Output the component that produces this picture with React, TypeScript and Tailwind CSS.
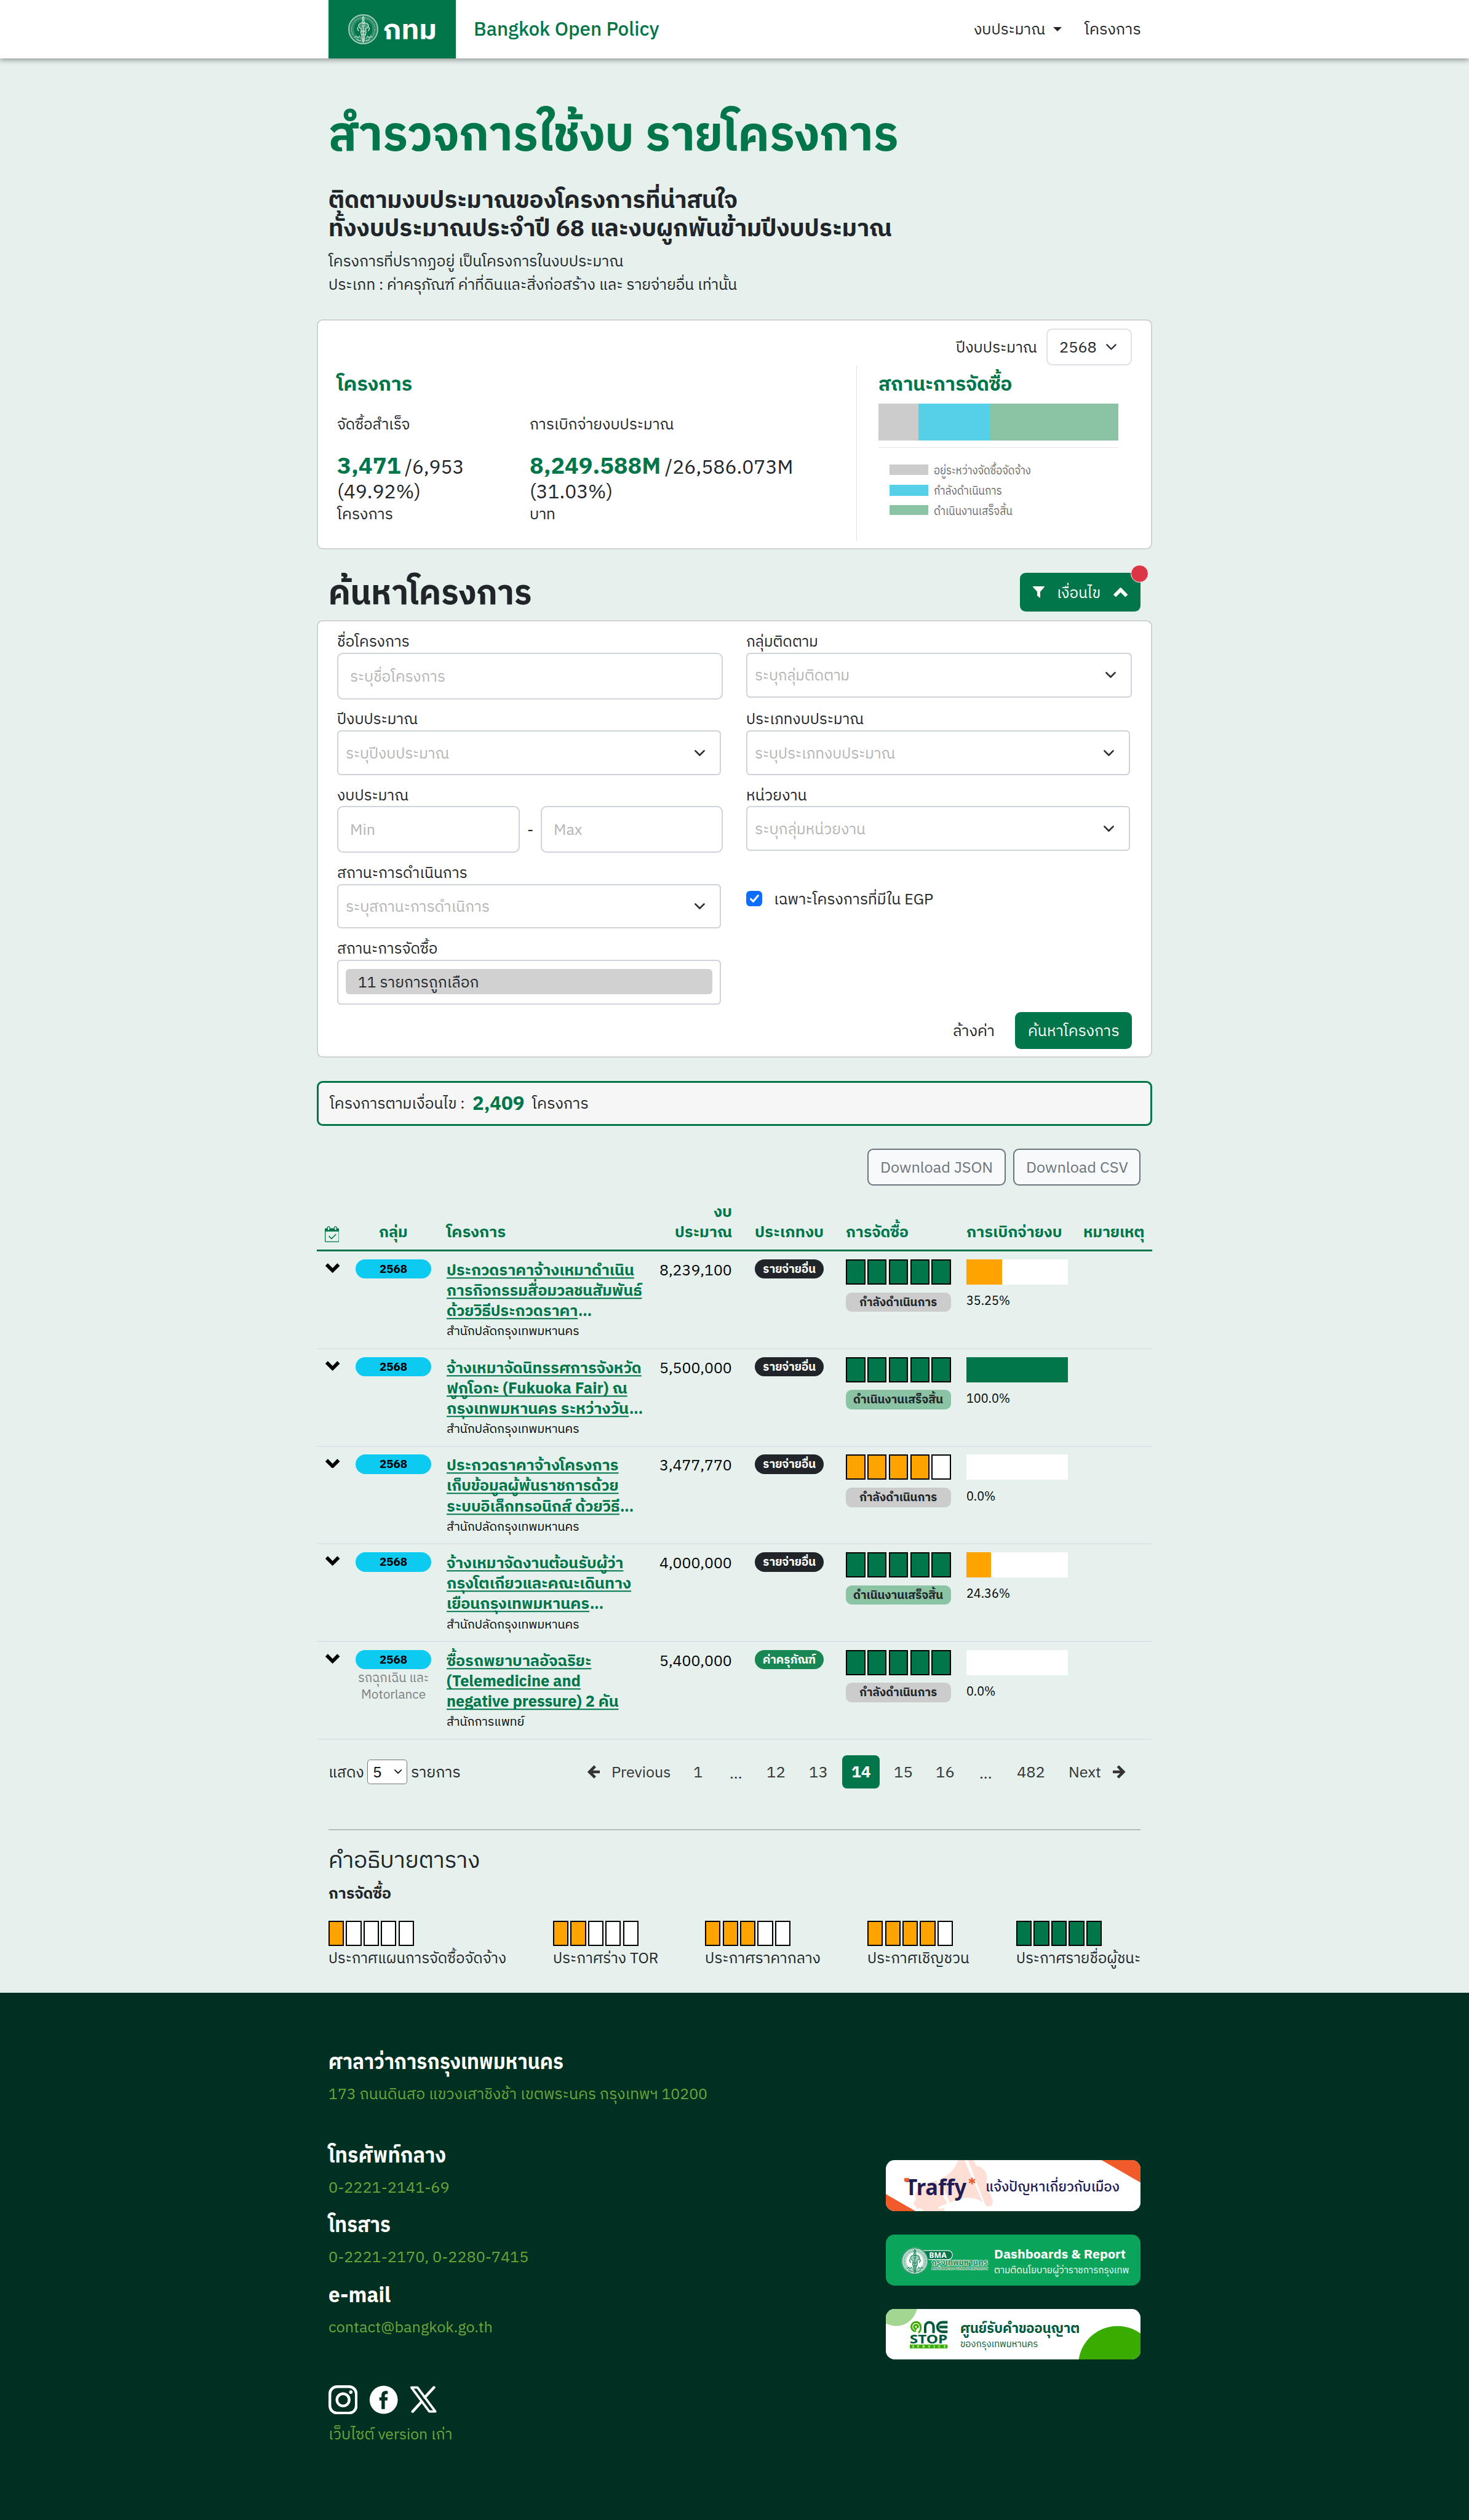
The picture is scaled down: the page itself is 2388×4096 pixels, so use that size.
import { useLayoutEffect, useRef, type ReactNode } from "react";

/* Text stretched or squeezed to the width that its class gives, dropped slightly to sit optically centred. */
function Fit({ className, children }: { className: string; children: ReactNode }) {
  const outer = useRef<HTMLSpanElement>(null);
  const inner = useRef<HTMLSpanElement>(null);
  useLayoutEffect(() => {
    const o = outer.current;
    const i = inner.current;
    if (!o || !i) return;
    i.style.transform = "none";
    const ratio = o.getBoundingClientRect().width / i.getBoundingClientRect().width;
    i.style.transform = `scaleX(${ratio}) translateY(0.09em)`;
  }, []);
  return (
    <span ref={outer} className={`inline-block text-left whitespace-nowrap ${className}`}>
      <span ref={inner} className="inline-block origin-left">
        {children}
      </span>
    </span>
  );
}

function Emblem({ className, solid = false }: { className: string; solid?: boolean }) {
  return (
    <svg viewBox="0 0 62 62" className={className} fill="none" stroke={solid ? "#0b7f50" : "#d3e8de"}>
      {solid && <circle cx="31" cy="31" r="31" fill="#dff1e8" stroke="none" />}
      <circle cx="31" cy="31" r="30" strokeWidth="1.6" />
      <circle cx="31" cy="31" r="28" strokeWidth=".7" />
      <circle cx="31" cy="31" r="24" strokeWidth="4" strokeDasharray="1 1.1" opacity=".75" />
      <circle cx="31" cy="31" r="20.5" strokeWidth=".8" opacity=".7" fill={solid ? "#fff" : "none"} />
      <path
        d="M31 5l-2 4 1 4-2 3 3 3 3-3-2-3 1-4zM24 19l-3 4 2 5 4 2-1 8 2 8 1 9 2 3 2-3 1-9 3-8-1-8 4-2 2-5-3-4-4-1-3 2-3-2zM28 22l3 4 3-4M31 26v28M27 34l4 3 4-3M28 42h7M20 26l-1 5 3 4M42 26l2 4-3 5"
        strokeWidth="1.5"
        fill={solid ? "#0b7f50" : "#d3e8de"}
        fillOpacity=".35"
      />
      <path d="M13 48l4-3 3 4 3-4 3 5M37 50l3-5 3 4 4-4 3 3M17 52l4 2 5 1M36 55l5-1 4-2" strokeWidth="1.6" opacity=".8" />
    </svg>
  );
}

function Chevron({ className, w = 2 }: { className: string; w?: number }) {
  return (
    <svg viewBox="0 0 16 10" className={className} fill="none" stroke="currentColor" strokeWidth={w}>
      {w > 3 ? <path d="M1.800 1.500L8 7.700l6.200-6.200" /> : <path d="M2 2l6 6 6-6" strokeLinecap="round" strokeLinejoin="round" />}
    </svg>
  );
}

function Steps({ n, size = "row" }: { n: number; size?: "row" | "legend" }) {
  const fill = n === 5 ? "bg-[#00764a]" : "bg-[#ffa300]";
  return (
    <div className={size === "row" ? "flex gap-[2px]" : "flex w-[88px] gap-[2px]"}>
      {[0, 1, 2, 3, 4].map((i) => (
        <div key={i} className={`h-[26px] flex-1 border-[1.3px] border-black ${i < n ? fill : "bg-white"}`} />
      ))}
    </div>
  );
}

function Label({ w, children }: { w: string; children: ReactNode }) {
  return (
    <div className="h-6 leading-6">
      <Fit className={w}>{children}</Fit>
    </div>
  );
}

function Select({ text, w, className = "" }: { text: string; w: string; className?: string }) {
  return (
    <div className={`flex h-[46px] items-center justify-between rounded-[4px] border-[1.3px] border-[#ced4da] bg-white pr-[15px] pl-[7.500px] text-[#b5b5b5] ${className}`}>
      <Fit className={w}>{text}</Fit>
      <Chevron className="w-[12px] text-[#2b3036]" w={2.3} />
    </div>
  );
}

function Input({ text, w, className = "" }: { text: string; w: string; className?: string }) {
  return (
    <div className={`flex h-12 items-center rounded-[6px] border-[1.3px] border-[#ced4da] bg-white px-3 text-[#b5b5b5] ${className}`}>
      <Fit className={w}>{text}</Fit>
    </div>
  );
}

const PALAD = { t: "สำนักปลัดกรุงเทพมหานคร", w: "w-[136.500px]" };

const rows = [
  {
    lines: [
      { t: "ประกวดราคาจ้างเหมาดำเนิน", w: "w-[193px]" },
      { t: "การกิจกรรมสื่อมวลชนสัมพันธ์", w: "w-[201px]" },
      { t: "ด้วยวิธีประกวดราคา", w: "w-[135px]" },
    ],
    dots: true,
    org: PALAD,
    amount: "8,239,100",
    steps: 5,
    done: false,
    pct: 35.25,
    label: { t: "35.25%", w: "w-[45px]" },
  },
  {
    lines: [
      { t: "จ้างเหมาจัดนิทรรศการจังหวัด", w: "w-[200.500px]" },
      { t: "ฟูกูโอกะ (Fukuoka Fair) ณ", w: "w-[186px]" },
      { t: "กรุงเทพมหานคร ระหว่างวัน", w: "w-[187.500px]" },
    ],
    dots: true,
    org: PALAD,
    amount: "5,500,000",
    steps: 5,
    done: true,
    pct: 100,
    label: { t: "100.0%", w: "w-[45px]" },
  },
  {
    lines: [
      { t: "ประกวดราคาจ้างโครงการ", w: "w-[177px]" },
      { t: "เก็บข้อมูลผู้พ้นราชการด้วย", w: "w-[177px]" },
      { t: "ระบบอิเล็กทรอนิกส์ ด้วยวิธี", w: "w-[178px]" },
    ],
    dots: true,
    org: PALAD,
    amount: "3,477,770",
    steps: 4,
    done: false,
    pct: 0,
    label: { t: "0.0%", w: "w-[30px]" },
  },
  {
    lines: [
      { t: "จ้างเหมาจัดงานต้อนรับผู้ว่า", w: "w-[182px]" },
      { t: "กรุงโตเกียวและคณะเดินทาง", w: "w-[190px]" },
      { t: "เยือนกรุงเทพมหานคร", w: "w-[147px]" },
    ],
    dots: true,
    org: PALAD,
    amount: "4,000,000",
    steps: 5,
    done: true,
    pct: 24.36,
    label: { t: "24.36%", w: "w-[45px]" },
  },
  {
    lines: [
      { t: "ซื้อรถพยาบาลอัจฉริยะ", w: "w-[149px]" },
      { t: "(Telemedicine and", w: "w-[138px]" },
      { t: "negative pressure) 2 คัน", w: "w-[177px]" },
    ],
    dots: false,
    org: { t: "สำนักการแพทย์", w: "w-[80px]" },
    amount: "5,400,000",
    steps: 5,
    done: false,
    pct: 0,
    label: { t: "0.0%", w: "w-[30px]" },
    group: true,
  },
];

const cols = "grid grid-cols-[32px_94px_217px_92px_101.5px_124.5px_120px_79px]";

function Row({ r }: { r: (typeof rows)[number] }) {
  return (
    <div className={`${cols} h-[100.5px] border-b-[1.300px] border-[#dee2e6] pt-2 text-black`}>
      <div className="flex justify-center pt-[4px]">
        <Chevron className="h-[10px] w-4" w={3.6} />
      </div>
      <div className="px-2 text-center">
        <div className="h-5 rounded-full bg-[#0dcaf0] text-[12px] leading-[19.500px] font-bold"><Fit className="w-[28.500px]">2568</Fit></div>
        {r.group && (
          <div className="-mx-2 text-[13px] leading-[17px] text-[#808080]">
            <Fit className="w-[73px]">รถฉุกเฉิน และ</Fit>
            <br />
            <Fit className="w-[66.500px]">Motorlance</Fit>
          </div>
        )}
      </div>
      <div className="px-2 whitespace-nowrap">
        <div className="h-[63px] leading-[21px] font-bold text-[#00764a]">
          {r.lines.map((l, i) => (
            <div key={i} className="h-[21px]">
              <Fit className={l.w}>
                <span className="underline decoration-[1.5px] underline-offset-[1.800px] [text-decoration-skip-ink:none]">{l.t}</span>
              </Fit>
              {i === 2 && r.dots && <Fit className="w-[14px]">...</Fit>}
            </div>
          ))}
        </div>
        <div className="text-[12.8px] leading-[21px]"><Fit className={r.org.w}>{r.org.t}</Fit></div>
      </div>
      <div className="pr-[7.500px] text-right leading-[22px]"><Fit className="w-[74.500px]">{r.amount}</Fit></div>
      <div className="pl-4">
        <div className={`h-5 w-[71px] rounded-full text-center text-[12px] leading-[19.500px] font-bold text-white ${r.group ? "bg-[#198754]" : "bg-[#212529]"}`}>
          <Fit className="w-[54.500px]">{r.group ? "ค่าครุภัณฑ์" : "รายจ่ายอื่น"}</Fit>
        </div>
      </div>
      <div className="px-2">
        <Steps n={r.steps} />
        <div className={`mt-2 h-5 rounded-[6px] text-center text-[12px] leading-[19.500px] font-bold text-[#212529] ${r.done ? "bg-[#8bc4a5]" : "bg-[#cccccc]"}`}>
          {r.done ? <Fit className="w-[92.500px]">ดำเนินงานเสร็จสิ้น</Fit> : <Fit className="w-[80px]">กำลังดำเนินการ</Fit>}
        </div>
      </div>
      <div className="px-2">
        <div className="h-[26px] bg-white">
          <div className={`h-full ${r.pct === 100 ? "bg-[#00764a]" : "bg-[#ffa300]"}`} style={{ width: `${r.pct}%` }} />
        </div>
        <div className="mt-[6.500px] text-[12.8px] leading-5"><Fit className={r.label.w}>{r.label.t}</Fit></div>
      </div>
    </div>
  );
}

const legend = [
  { n: 1, t: "ประกาศแผนการจัดซื้อจัดจ้าง", w: "w-[183px]" },
  { n: 2, t: "ประกาศร่าง TOR", w: "w-[108.500px]" },
  { n: 3, t: "ประกาศราคากลาง", w: "w-[119px]" },
  { n: 4, t: "ประกาศเชิญชวน", w: "w-[105px]" },
  { n: 5, t: "ประกาศรายชื่อผู้ชนะ", w: "w-[128px]" },
];

function Banners() {
  return (
    <div className="flex w-[262.5px] flex-col gap-6">
      <div className="relative h-[52.5px] overflow-hidden rounded-[9px] bg-white pt-[17.500px] pl-[103px] text-[#211c54]">
        <svg viewBox="0 0 262.5 52.5" className="absolute inset-0 h-full w-full">
          <g fill="#fddfd6">
            <path d="M74.5 0H81L99.5 43C90 37 76 38 66 44L55 20C63 17 71 10 74.5 0z" />
            <path d="M52 21L63 45 59 46 54 48.500 55 50.500 59 49 61 52.500H38.500L37 50H32L28 44 31 41 30 36C32 29 40 24 52 21z" />
            <path d="M84.500 0H90L93.500 6C101 7 107 16 103 22.500L110 42C111 48 104 50 102 45z" />
          </g>
          <path d="M0 35L30.500 52.500H0zM222 0H262.500V23.300z" fill="#f15a29" />
          <text x="20" y="36" fontSize="23" fontWeight="700" fontFamily="'Noto Sans', sans-serif" fill="#211c54" textLength="63" lengthAdjust="spacingAndGlyphs">Traffy</text>
          <rect x="19" y="18.500" width="5" height="3.500" fill="#f15a29" />
          <path d="M88.700 18v7M85.500 19.800l6.400 3.400M91.900 19.800l-6.400 3.400" stroke="#f15a29" strokeWidth="1.500" />
        </svg>
        <div className="relative text-[14px] leading-[19px] font-medium"><Fit className="w-[138px]">แจ้งปัญหาเกี่ยวกับเมือง</Fit></div>
      </div>
      <div className="relative h-[52.5px] overflow-hidden rounded-[9px] bg-[#0ba45b] pt-[11px] pl-[111.5px] text-white">
        <svg viewBox="0 0 262.5 52.5" className="absolute inset-0 h-full w-full">
          <path d="M36 16.500H64a4.600 4.600 0 0 1 0 9.200H36z" fill="#00764a" stroke="#dff1e8" strokeWidth=".8" />
          <text x="44.500" y="24" fontSize="8" fontWeight="700" fontFamily="'Noto Sans', sans-serif" fill="#fff" textLength="18" lengthAdjust="spacingAndGlyphs">BMA</text>
          <text x="47" y="31.500" fontSize="8.500" fontWeight="700" fontFamily="'IBM Plex Sans Thai', 'Noto Sans Thai', sans-serif" fill="#1c8f5e" stroke="#e8f5ee" strokeWidth="1" paintOrder="stroke" textLength="58" lengthAdjust="spacingAndGlyphs">กรุงเทพมหานคร</text>
          <text x="47" y="36.300" fontSize="3" fontWeight="700" fontFamily="'Noto Sans', sans-serif" fill="#0b7f50" stroke="#e8f5ee" strokeWidth=".7" paintOrder="stroke" textLength="58" lengthAdjust="spacingAndGlyphs">BANGKOK METROPOLITAN ADMINISTRATION</text>
        </svg>
        <Emblem solid className="absolute top-[13.5px] left-4 h-7 w-7" />
        <div className="text-[12.5px] leading-[19px] font-bold"><Fit className="w-[135.5px]">Dashboards &amp; Report</Fit></div>
        <div className="text-[10px] leading-[13px]"><Fit className="w-[139px]">ตามติดนโยบายผู้ว่าราชการกรุงเทพ</Fit></div>
      </div>
      <div className="relative h-[52.5px] overflow-hidden rounded-[9px] bg-white pt-[9.500px] pl-[77px] text-[#00593a]">
        <svg viewBox="0 0 262.5 52.5" className="absolute inset-0 h-full w-full">
          <circle cx="10.700" cy="-4.200" r="21.700" fill="#a3d691" />
          <circle cx="238.500" cy="57.900" r="40.400" fill="#3aac00" />
          <path d="M31 22.800C25 23 24.500 14 31 13.400C37 13.500 37 22 33.500 24.500M31.800 20.500C28.500 21 28 16.500 31 16.300C34 16.500 33.500 19.500 31.500 19" fill="none" stroke="#3aac00" strokeWidth="1.900" />
          <g fill="none" stroke="#00593a" strokeWidth="2.600">
            <path d="M40.500 24.800V18a4.300 4.300 0 0 1 8.600 0V24.800" />
            <path d="M63.500 13.700H58a4.900 4.900 0 0 0 0 9.800H63.500M55 18.600H63.500" />
          </g>
          <text x="24.500" y="35.700" fontSize="12.500" fontWeight="700" fontFamily="'Noto Sans', sans-serif" fill="#00593a" textLength="39" lengthAdjust="spacingAndGlyphs">STOP</text>
          <rect x="24.700" y="36.600" width="38.800" height="4" fill="#3aac00" />
          <text x="27" y="40" fontSize="3.600" fontWeight="700" fontFamily="'Noto Sans', sans-serif" fill="#eaf7e0" textLength="34.500">SERVICE</text>
        </svg>
        <div className="relative text-[14px] leading-[20px] font-bold"><Fit className="w-[123px]">ศูนย์รับคำขออนุญาต</Fit></div>
        <div className="relative text-[10.5px] leading-[13px]"><Fit className="w-[80px]">ของกรุงเทพมหานคร</Fit></div>
      </div>
    </div>
  );
}

const footHead = "h-[26px] text-[22px] leading-[26px] font-bold text-white";

export default function App() {
  return (
    <div className="h-[2593.4px] w-[1512px] bg-[#e6f0ec] font-['IBM_Plex_Sans_Thai','Noto_Sans_Thai','Noto_Sans',sans-serif] text-[16px] leading-6 text-[#212529] [zoom:1.57937]">
      <header className="relative h-[60px] bg-white shadow-[0_2px_5px_rgba(0,0,0,0.36)]">
        <div className="mx-auto flex h-full w-[836px] items-center">
          <div className="flex h-full w-[131px] items-center bg-[#00764a] pl-[20.5px] text-white">
            <Emblem className="h-[31px] w-[31px]" />
            <span className="ml-[5px] text-[28px] leading-[48px] font-bold"><Fit className="w-[55px]">กทม</Fit></span>
          </div>
          <span className="ml-[18.500px] text-[20px] font-medium text-[#00764a]"><Fit className="w-[191px]">Bangkok Open Policy</Fit></span>
          <nav className="ml-auto flex items-center">
            <Fit className="w-[73.500px]">งบประมาณ</Fit>
            <span className="mr-[23px] ml-[8.500px] border-x-[5px] border-t-[5px] border-x-transparent border-t-[#212529]" />
            <Fit className="w-[58px]">โครงการ</Fit>
          </nav>
        </div>
      </header>

      <main className="mx-auto h-[1991px] w-[860px]">
        <div className="px-3 pt-[47.400px]">
          <h1 className="h-[59px] text-[50px] leading-[58px] font-bold text-[#00764a]"><Fit className="w-[587px]">สำรวจการใช้งบ รายโครงการ</Fit></h1>
          <h2 className="mt-[25px] h-[57.600px] text-[24px] leading-[28.8px] font-bold">
            <Fit className="w-[421px]">ติดตามงบประมาณของโครงการที่น่าสนใจ</Fit><br />
            <Fit className="w-[580px]">ทั้งงบประมาณประจำปี 68 และงบผูกพันข้ามปีงบประมาณ</Fit>
          </h2>
          <p className="mt-[7.600px] h-12">
            <Fit className="w-[303.500px]">โครงการที่ปรากฏอยู่ เป็นโครงการในงบประมาณ</Fit><br />
            <Fit className="w-[420.500px]">ประเภท : ค่าครุภัณฑ์ ค่าที่ดินและสิ่งก่อสร้าง และ รายจ่ายอื่น เท่านั้น</Fit>
          </p>
        </div>

        <section className="mt-[24px] h-[237px] rounded-[6px] border-[1.3px] border-[#cfd2d1] bg-white px-5 pt-2">
          <div className="flex items-center justify-end gap-[9px]">
            <Fit className="w-[83.500px]">ปีงบประมาณ</Fit>
            <div className="flex h-[38px] w-[88px] items-center justify-between rounded-[6px] border-[1.3px] border-[#dee2e6] pr-[14px] pl-3">
              <Fit className="w-[38.500px]">2568</Fit>
              <Chevron className="w-[12px] text-[#2b3036]" w={2} />
            </div>
          </div>
          <div className="flex">
            <div className="h-[181px] w-[535px] border-r border-[#dee2e6] pt-[7.500px]">
              <h5 className="text-[20px] leading-6 font-bold text-[#00764a]"><Fit className="w-[77.500px]">โครงการ</Fit></h5>
              <div className="mt-[16.6px] flex">
                <div className="w-[198px]">
                  <div><Fit className="w-[75px]">จัดซื้อสำเร็จ</Fit></div>
                  <div className="mt-[18.9px] h-[50px] text-[20px] leading-[25px]">
                    <b className="text-[24px] text-[#00764a]"><Fit className="w-[65.500px]">3,471</Fit></b><Fit className="ml-1 w-[61px]">/6,953</Fit><br /><Fit className="w-[86px]">(49.92%)</Fit>
                  </div>
                  <div><Fit className="w-[57.500px]">โครงการ</Fit></div>
                </div>
                <div>
                  <div><Fit className="w-[148.500px]">การเบิกจ่ายงบประมาณ</Fit></div>
                  <div className="mt-[18.9px] h-[50px] text-[20px] leading-[25px]">
                    <b className="text-[24px] text-[#00764a]"><Fit className="w-[135px]">8,249.588M</Fit></b><Fit className="ml-1 w-[132px]">/26,586.073M</Fit><br /><Fit className="w-[85.500px]">(31.03%)</Fit>
                  </div>
                  <div><Fit className="w-[26.500px]">บาท</Fit></div>
                </div>
              </div>
            </div>
            <div className="w-[269px] pt-[7.500px] pl-[22px]">
              <h5 className="text-[20px] leading-6 font-bold text-[#00764a]"><Fit className="w-[137.500px]">สถานะการจัดซื้อ</Fit></h5>
              <div className="mt-[7.8px] flex h-[38.5px]">
                <div className="w-[41px] bg-[#cccccc]" />
                <div className="w-[74px] bg-[#56d0e8]" />
                <div className="flex-1 bg-[#8bc4a5]" />
              </div>
              <div className="mt-[6.5px] h-px bg-[#e5e5e5]" />
              <div className="mt-[17px] ml-[11px] flex flex-col gap-[10px] text-[12px] leading-[11px] text-[#666]">
                <div className="flex h-[11px] gap-[6px]"><i className="h-[11px] w-10 bg-[#cccccc]" /><Fit className="w-[100px]">อยู่ระหว่างจัดซื้อจัดจ้าง</Fit></div>
                <div className="flex h-[11px] gap-[6px]"><i className="h-[11px] w-10 bg-[#56d0e8]" /><Fit className="w-[70px]">กำลังดำเนินการ</Fit></div>
                <div className="flex h-[11px] gap-[6px]"><i className="h-[10px] w-10 bg-[#8bc4a5]" /><Fit className="w-[81px]">ดำเนินงานเสร็จสิ้น</Fit></div>
              </div>
            </div>
          </div>
        </section>

        <div className="mt-[22px] flex h-[51px] justify-between px-3">
          <h2 className="text-[36px] leading-[42px] font-bold"><Fit className="w-[209.500px]">ค้นหาโครงการ</Fit></h2>
          <div className="relative mt-[2px] flex h-10 w-[124px] items-center rounded-[6px] bg-[#00764a] pl-[13px] text-white">
            <svg viewBox="0 0 12 12" className="h-3 w-3" fill="currentColor"><path d="M.3 0h11.400c.4 0 .4.500.2.800L7.600 5.500V12L4.500 9.800V5.500L.1.800C-.1.500 0 0 .3 0z" /></svg>
            <Fit className="ml-[12.500px] w-[45px]">เงื่อนไข</Fit>
            <Chevron className="ml-[13px] h-[10px] w-4 rotate-180" w={3.600} />
            <span className="absolute -top-2 -right-2 h-[18px] w-[18px] rounded-full border border-[#f8f9fa] bg-[#dc3545]" />
          </div>
        </div>

        <section className="h-[450px] rounded-[6px] border-[1.3px] border-[#cfd2d1] bg-white px-5 pt-2">
          <div className="grid h-[394px] grid-cols-[397px_397px] gap-x-6">
            <div className="flex flex-col">
              <Label w="w-[74.500px]">ชื่อโครงการ</Label>
              <Input text="ระบุชื่อโครงการ" w="w-[98px]" />
              <div className="mt-2"><Label w="w-[83px]">ปีงบประมาณ</Label></div>
              <Select text="ระบุปีงบประมาณ" w="w-[106.500px]" className="w-[395px]" />
              <div className="mt-2"><Label w="w-[73.500px]">งบประมาณ</Label></div>
              <div className="flex items-center justify-between">
                <Input text="Min" w="w-[26px]" className="w-[187.5px]" />
                <Fit className="w-[6.500px]">-</Fit>
                <Input text="Max" w="w-[29.500px]" className="w-[187.5px]" />
              </div>
              <div className="mt-2"><Label w="w-[134px]">สถานะการดำเนินการ</Label></div>
              <Select text="ระบุสถานะการดำเนิการ" w="w-[148px]" className="w-[395px]" />
              <div className="mt-2"><Label w="w-[103.500px]">สถานะการจัดซื้อ</Label></div>
              <div className="h-[46px] w-[395px] rounded-[4px] border-[1.3px] border-[#ced4da] px-[7.5px] pt-2">
                <div className="h-[26.4px] rounded-[4px] bg-[#d1d1d1] pl-[12.5px] leading-[26px]"><Fit className="w-[124.500px]">11 รายการถูกเลือก</Fit></div>
              </div>
            </div>
            <div className="flex flex-col">
              <Label w="w-[74px]">กลุ่มติดตาม</Label>
              <Select text="ระบุกลุ่มติดตาม" w="w-[97.500px]" />
              <div className="mt-[10px]"><Label w="w-[121px]">ประเภทงบประมาณ</Label></div>
              <Select text="ระบุประเภทงบประมาณ" w="w-[144.500px]" className="w-[395px]" />
              <div className="mt-2"><Label w="w-[62.500px]">หน่วยงาน</Label></div>
              <Select text="ระบุกลุ่มหน่วยงาน" w="w-[114px]" className="w-[395px]" />
              <div className="mt-[37px] flex items-center gap-3">
                <span className="flex h-4 w-4 items-center justify-center rounded-[4px] bg-[#0d6efd]">
                  <svg viewBox="0 0 12 12" className="h-3 w-3" fill="none" stroke="#fff" strokeWidth="2" strokeLinecap="round" strokeLinejoin="round"><path d="M2.200 6.500l2.500 2.500 5-6" /></svg>
                </span>
                <Fit className="w-[164px]">เฉพาะโครงการที่มีใน EGP</Fit>
              </div>
            </div>
          </div>
          <div className="flex items-center justify-end gap-[21px]">
            <Fit className="w-[43px]">ล้างค่า</Fit>
            <span className="flex h-[38px] w-[120px] items-center justify-center rounded-[6px] bg-[#00764a] text-white"><Fit className="w-[94px]">ค้นหาโครงการ</Fit></span>
          </div>
        </section>

        <div className="mt-6 flex h-[46px] items-center rounded-[6px] border-2 border-[#00764a] bg-[#f6f6f6] pl-[11.500px]">
          <Fit className="w-[139px]">โครงการตามเงื่อนไข :</Fit>
          <b className="mx-2 text-[20px] text-[#00764a]"><Fit className="w-[53.500px]">2,409</Fit></b>
          <Fit className="w-[58px]">โครงการ</Fit>
        </div>

        <div className="mt-[23.500px] flex justify-end gap-2 px-3 text-[#6c757d]">
          <span className="flex h-[38px] w-[142px] items-center justify-center rounded-[6px] border-[1.3px] border-[#6c757d] bg-[#f8f9fa]"><Fit className="w-[116px]">Download JSON</Fit></span>
          <span className="flex h-[38px] w-[131px] items-center justify-center rounded-[6px] border-[1.3px] border-[#6c757d] bg-[#f8f9fa]"><Fit className="w-[105px]">Download CSV</Fit></span>
        </div>

        <div className={`${cols} mt-2 h-[60px] items-end border-b-2 border-[#00764a] pb-2 leading-[21px] font-bold whitespace-nowrap text-[#00764a]`}>
          <div className="pl-2">
            <svg viewBox="0 0 15 16.500" className="h-[16.500px] w-[15px]" fill="none" stroke="#00764a">
              <rect x=".4" y="2.800" width="14.200" height="13.300" rx=".8" strokeWidth=".8" />
              <path d="M0 2.300h15V5.500H0z" fill="#00764a" stroke="none" />
              <rect x="2.700" y=".4" width="2.400" height="4" rx="1.200" fill="#e6f0ec" strokeWidth=".8" />
              <rect x="9.800" y=".4" width="2.400" height="4" rx="1.200" fill="#e6f0ec" strokeWidth=".8" />
              <path d="M4.200 10.200l2.700 2.700 4.700-4.700" />
            </svg>
          </div>
          <div className="h-[21px] text-center"><Fit className="w-[29.500px]">กลุ่ม</Fit></div>
          <div className="h-[21px] px-2"><Fit className="w-[61px]">โครงการ</Fit></div>
          <div className="h-[42px] pr-[7.500px] text-right"><Fit className="w-[19px]">งบ</Fit><br /><Fit className="w-[59px]">ประมาณ</Fit></div>
          <div className="h-[21px] pl-4"><Fit className="w-[71px]">ประเภทงบ</Fit></div>
          <div className="h-[21px] px-2"><Fit className="w-[64.500px]">การจัดซื้อ</Fit></div>
          <div className="h-[21px] px-2"><Fit className="w-[98.500px]">การเบิกจ่ายงบ</Fit></div>
          <div className="h-[21px] pl-2"><Fit className="w-[63px]">หมายเหตุ</Fit></div>
        </div>
        {rows.map((r, i) => (
          <Row key={i} r={r} />
        ))}

        <div className="mt-4 flex h-[34px] items-center px-3">
          <Fit className="w-[36.500px]">แสดง</Fit>
          <span className="mr-1 ml-[3.500px] flex h-[25px] w-[41px] items-center justify-between rounded-[3px] border border-[#767676] bg-white pr-1 pl-[5px] text-black">
            <Fit className="w-[9.600px]">5</Fit>
            <Chevron className="w-[9px]" w={1.800} />
          </span>
          <Fit className="w-[51px]">รายการ</Fit>
          <div className="ml-auto flex items-center pr-[15.500px] text-[#333]">
            <svg viewBox="0 0 13 14" className="h-[14px] w-[13px]" fill="none" stroke="currentColor" strokeWidth="2.900"><path d="M13 7H2.500M7.800 1.200L2 7l5.800 5.800" /></svg>
            <span className="mr-[8.500px] ml-3"><Fit className="w-[61px]">Previous</Fit></span>
            <span className="w-[39px] text-center"><Fit className="w-[9.600px]">1</Fit></span>
            <span className="w-[39px] pt-[3px] text-center"><Fit className="w-[13px]">...</Fit></span>
            <span className="w-[43px] text-center"><Fit className="w-[19.500px]">12</Fit></span>
            <span className="w-[44px] text-center"><Fit className="w-[19.500px]">13</Fit></span>
            <span className="mx-[2.500px] flex h-[34px] w-[39px] items-center justify-center rounded-[5px] bg-[#00764a] font-bold text-white"><Fit className="w-[20px]">14</Fit></span>
            <span className="w-[43px] text-center"><Fit className="w-[19.500px]">15</Fit></span>
            <span className="w-[43px] text-center"><Fit className="w-[19.500px]">16</Fit></span>
            <span className="w-[41px] pt-[3px] text-center"><Fit className="w-[13px]">...</Fit></span>
            <span className="w-[52px] text-center"><Fit className="w-[29px]">482</Fit></span>
            <span className="mr-3 ml-[13px]"><Fit className="w-[33.500px]">Next</Fit></span>
            <svg viewBox="0 0 13 14" className="h-[14px] w-[13px]" fill="none" stroke="currentColor" strokeWidth="2.900"><path d="M0 7h10.500M5.200 1.200L11 7l-5.800 5.800" /></svg>
          </div>
        </div>

        <div className="mx-3 mt-[42px] border-t-[1.300px] border-[#b5bdb9]">
          <h4 className="mt-[15.500px] h-[28.800px] text-[24px] leading-[28.800px]"><Fit className="w-[156px]">คำอธิบายตาราง</Fit></h4>
          <div className="mt-[8.500px] h-6 font-bold"><Fit className="w-[64.500px]">การจัดซื้อ</Fit></div>
          <div className="mt-4 flex justify-between">
            {legend.map((l) => (
              <div key={l.n}>
                <Steps n={l.n} size="legend" />
                <div><Fit className={l.w}>{l.t}</Fit></div>
              </div>
            ))}
          </div>
        </div>
      </main>

      <footer className="h-[542.400px] bg-[#003021] text-[#6ca53a]">
        <div className="mx-auto flex w-[836px] justify-between">
          <div className="pt-[57.500px]">
            <div className={footHead}><Fit className="w-[242px]">ศาลาว่าการกรุงเทพมหานคร</Fit></div>
            <div className="mt-[8.300px] h-6"><Fit className="w-[390px]">173 ถนนดินสอ แขวงเสาชิงช้า เขตพระนคร กรุงเทพฯ 10200</Fit></div>
            <div className={`mt-[37.700px] ${footHead}`}><Fit className="w-[121px]">โทรศัพท์กลาง</Fit></div>
            <div className="mt-[8.300px] h-6"><Fit className="w-[124.500px]">0-2221-2141-69</Fit></div>
            <div className={`mt-[13.700px] ${footHead}`}><Fit className="w-[64px]">โทรสาร</Fit></div>
            <div className="mt-[8.300px] h-6"><Fit className="w-[206px]">0-2221-2170, 0-2280-7415</Fit></div>
            <div className={`mt-[13.700px] ${footHead}`}><Fit className="w-[64px]">e-mail</Fit></div>
            <div className="mt-[8.300px] h-6"><Fit className="w-[169px]">contact@bangkok.go.th</Fit></div>
            <div className="mt-[48px] flex items-center gap-3 text-white">
              <svg viewBox="0 0 30 30" className="h-[30px] w-[30px]" fill="none" stroke="currentColor" strokeWidth="2.800"><rect x="1.400" y="1.400" width="27.200" height="27.200" rx="7.500" /><circle cx="15" cy="15" r="6.300" /><circle cx="23" cy="7" r="1.800" fill="currentColor" stroke="none" /></svg>
              <svg viewBox="0 0 30 30" className="h-[30px] w-[30px]"><circle cx="15" cy="15" r="14.500" fill="currentColor" /><path d="M12.800 24.500v-8.800h-2.200v-3.300h2.200v-2c0-3.200 1.700-4.600 4.400-4.600.9 0 1.600.1 2 .2v3h-1.500c-1.200 0-1.500.6-1.500 1.500v1.900h3l-.5 3.300h-2.500v8.800z" fill="#003021" /></svg>
              <svg viewBox="0 0 28 28" className="h-[28px] w-[28px]" fill="none" stroke="currentColor" strokeWidth="2.400" strokeLinejoin="round" strokeLinecap="round"><path d="M1.800 1.600H8L26.400 26.400H20.200z" /><path d="M25 1.600L15.500 11.800M12.300 16.200L3 26.400" strokeWidth="2.800" /></svg>
            </div>
            <div className="mt-2"><Fit className="w-[127.500px]">เว็บไซต์ version เก่า</Fit></div>
          </div>
          <div className="pt-[172px]"><Banners /></div>
        </div>
      </footer>
    </div>
  );
}
